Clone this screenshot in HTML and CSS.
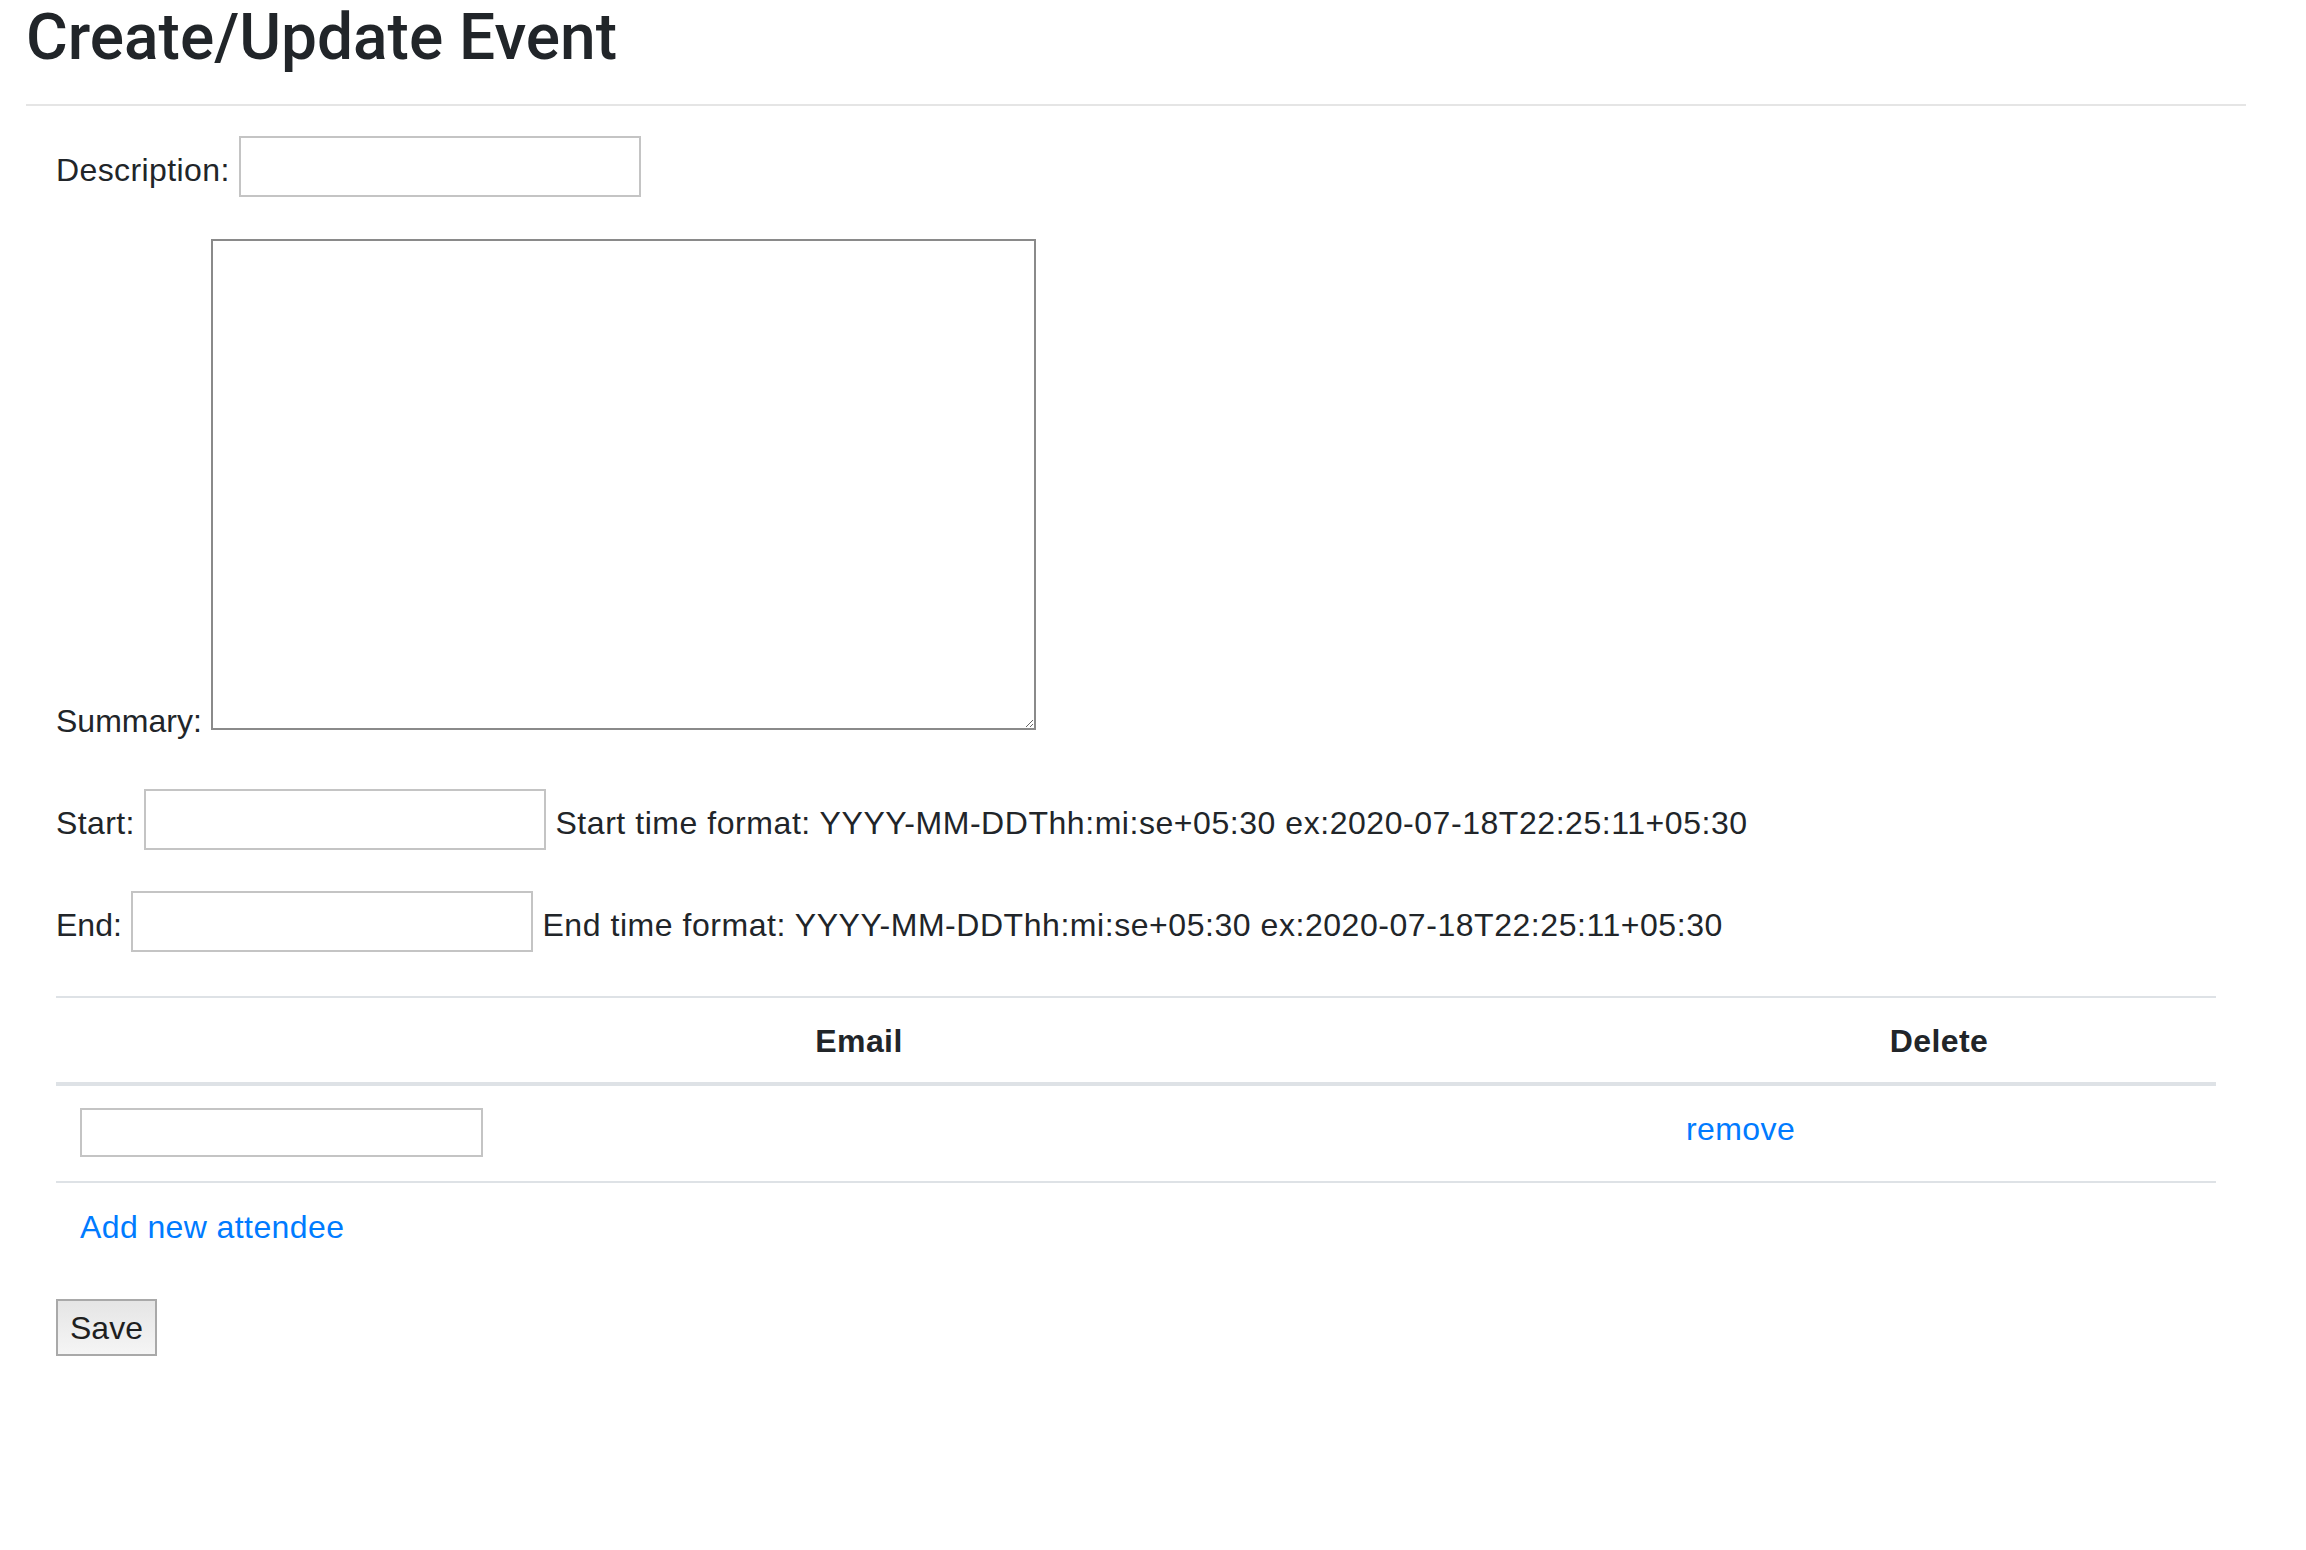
FILE: index.html
```html
<!DOCTYPE html>
<html lang="en">
<head>
<meta charset="utf-8">
<title>Create/Update Event</title>
<link rel="stylesheet" href="styles.css">
</head>
<body>
<div class="page">
  <h1 class="title">Create/Update Event</h1>
  <hr class="divider">
  <form class="event-form">
    <div class="field field-desc">
      <label>Description:</label> <input type="text" class="text-input">
    </div>
    <div class="field field-summary">
      <label class="tight">Summary:</label> <textarea class="summary-box"></textarea>
    </div>
    <div class="field field-start">
      <label>Start:</label> <input type="text" class="text-input"> <span class="hint">Start time format: YYYY-MM-DDThh:mi:se+05:30 ex:2020-07-18T22:25:11+05:30</span>
    </div>
    <div class="field field-end">
      <label class="tight">End:</label> <input type="text" class="text-input"> <span class="hint">End time format: YYYY-MM-DDThh:mi:se+05:30 ex:2020-07-18T22:25:11+05:30</span>
    </div>
    <table class="attendees">
      <colgroup>
        <col class="col-email">
        <col class="col-delete">
      </colgroup>
      <thead>
        <tr>
          <th>Email</th>
          <th>Delete</th>
        </tr>
      </thead>
      <tbody>
        <tr>
          <td class="cell-input"><input type="text" class="email-input"></td>
          <td class="cell-remove"><a href="#" class="link">remove</a></td>
        </tr>
        <tr>
          <td class="cell-add" colspan="2"><a href="#" class="link">Add new attendee</a></td>
        </tr>
      </tbody>
    </table>
    <button type="button" class="save-btn">Save</button>
  </form>
</div>
</body>
</html>
```
FILE: styles.css
```css
html, body {
  margin: 0;
  padding: 0;
  background: #ffffff;
}

body {
  font-family: "Liberation Sans", Arial, sans-serif;
  font-size: 32px;
  line-height: 48px;
  letter-spacing: 0.4px;
  color: #212529;
}

.page {
  padding: 0 60px 0 26px;
}

.title {
  margin: 0;
  font-family: Roboto, "Liberation Sans", sans-serif;
  font-weight: 500;
  font-size: 64px;
  line-height: 76.8px;
  letter-spacing: 0;
  color: #212529;
}

.divider {
  margin: 27px 0 0;
  border: 0;
  border-top: 2px solid rgba(0, 0, 0, 0.1);
  height: 0;
}

.event-form {
  padding: 0 30px;
}

.field {
  white-space: nowrap;
}

.tight {
  letter-spacing: 0;
}

.hint {
  letter-spacing: 0.55px;
}

.field-desc { margin-top: 30px; }
.field-summary { margin-top: 42px; }
.field-start { margin-top: 44px; }
.field-end { margin-top: 41px; }

.text-input {
  box-sizing: border-box;
  width: 402px;
  height: 61px;
  margin: 0;
  padding: 7px 8px 0;
  border: 2px solid #c4c4c4;
  border-radius: 0;
  background: #fff;
  font-family: "Liberation Sans", Arial, sans-serif;
  font-size: 32px;
  vertical-align: baseline;
}

.summary-box {
  box-sizing: border-box;
  width: 825px;
  height: 491px;
  margin: 0;
  padding: 4px;
  border: 2px solid #8a8a8a;
  border-radius: 0;
  font-family: "Liberation Sans", Arial, sans-serif;
  font-size: 32px;
  vertical-align: 2px;
}

.attendees {
  width: 100%;
  margin-top: 44px;
  border-collapse: separate;
  border-spacing: 0;
  table-layout: fixed;
}

.col-email { width: 1606px; }

.attendees th {
  padding: 19px 24px 17px;
  border-top: 2px solid #dee2e6;
  border-bottom: 4px solid #dee2e6;
  text-align: center;
  font-weight: bold;
  line-height: 48px;
}

.attendees td {
  vertical-align: top;
  text-align: left;
}

.cell-input {
  padding: 22px 24px 24px;
}

.cell-remove {
  padding: 19px 24px 0;
}

.cell-add {
  padding: 20px 24px 24px;
  border-top: 2px solid #dee2e6;
}

.email-input {
  display: block;
  box-sizing: border-box;
  width: 403px;
  height: 49px;
  margin: 0;
  padding: 0 8px;
  border: 2px solid #c4c4c4;
  border-radius: 0;
  background: #fff;
  font-family: "Liberation Sans", Arial, sans-serif;
  font-size: 32px;
}

.link {
  color: #007bff;
  text-decoration: none;
}

.save-btn {
  display: block;
  box-sizing: border-box;
  height: 57px;
  margin: 24px 0 0;
  padding: 2px 12px 0;
  border: 2px solid #a9a9a9;
  border-radius: 0;
  background: linear-gradient(#e5e5e5, #f5f5f5);
  font-family: "Liberation Sans", Arial, sans-serif;
  font-size: 32px;
  line-height: 1;
  letter-spacing: 0;
  color: #1f1f1f;
}
```
